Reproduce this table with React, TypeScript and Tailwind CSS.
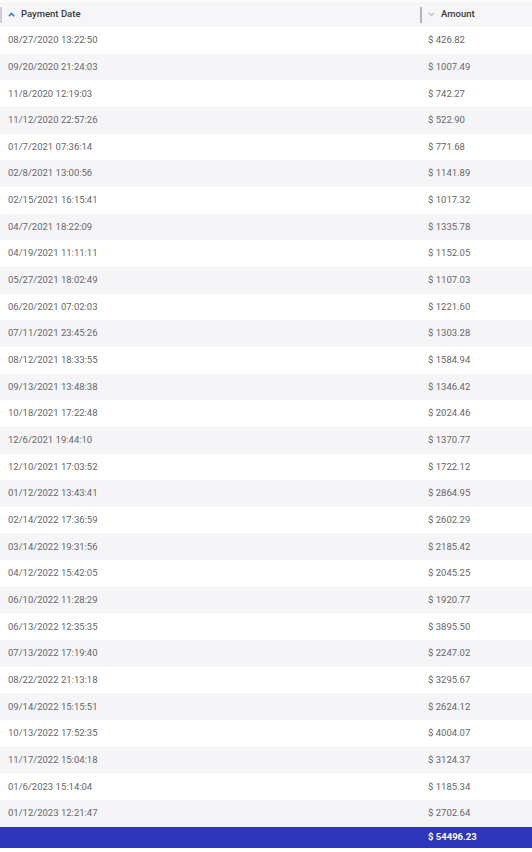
import React from "react"

const ROWS: [string, string][] = [
  ["08/27/2020 13:22:50", "426.82"],
  ["09/20/2020 21:24:03", "1007.49"],
  ["11/8/2020 12:19:03", "742.27"],
  ["11/12/2020 22:57:26", "522.90"],
  ["01/7/2021 07:36:14", "771.68"],
  ["02/8/2021 13:00:56", "1141.89"],
  ["02/15/2021 16:15:41", "1017.32"],
  ["04/7/2021 18:22:09", "1335.78"],
  ["04/19/2021 11:11:11", "1152.05"],
  ["05/27/2021 18:02:49", "1107.03"],
  ["06/20/2021 07:02:03", "1221.60"],
  ["07/11/2021 23:45:26", "1303.28"],
  ["08/12/2021 18:33:55", "1584.94"],
  ["09/13/2021 13:48:38", "1346.42"],
  ["10/18/2021 17:22:48", "2024.46"],
  ["12/6/2021 19:44:10", "1370.77"],
  ["12/10/2021 17:03:52", "1722.12"],
  ["01/12/2022 13:43:41", "2864.95"],
  ["02/14/2022 17:36:59", "2602.29"],
  ["03/14/2022 19:31:56", "2185.42"],
  ["04/12/2022 15:42:05", "2045.25"],
  ["06/10/2022 11:28:29", "1920.77"],
  ["06/13/2022 12:35:35", "3895.50"],
  ["07/13/2022 17:19:40", "2247.02"],
  ["08/22/2022 21:13:18", "3295.67"],
  ["09/14/2022 15:15:51", "2624.12"],
  ["10/13/2022 17:52:35", "4004.07"],
  ["11/17/2022 15:04:18", "3124.37"],
  ["01/6/2023 15:14:04", "1185.34"],
  ["01/12/2023 12:21:47", "2702.64"],
]

export default function App() {
  return (
    <div className="w-[532px] h-[852px] bg-white text-[9.5px] font-['Roboto',sans-serif] text-[#666]">
      {/* Header */}
      <div className="flex h-[27px] items-center bg-[#f6f6f8] border-t-2 border-[#fbfbfc] text-[#3a3a3a] font-medium">
        <div className="h-4 w-[2px] bg-[#d0d0d4]" />
        <div className="flex w-[418px] items-center gap-[6px] pl-[6px]">
          <svg width="7" height="5" viewBox="0 0 7 5">
            <path d="M0.8 4.2 L3.5 1.4 L6.2 4.2" fill="none" stroke="#3b7bd4" strokeWidth="1.6" />
          </svg>
          <span>Payment Date</span>
        </div>
        <div className="h-4 w-[2px] bg-[#b5b5b8]" />
        <div className="flex items-center gap-[6px] pl-[6px]">
          <svg width="7" height="5" viewBox="0 0 7 5">
            <path d="M0.8 0.8 L3.5 3.6 L6.2 0.8" fill="none" stroke="#c4c4c8" strokeWidth="1.4" />
          </svg>
          <span>Amount</span>
        </div>
      </div>

      {/* Rows */}
      {ROWS.map(([date, amount], i) => (
        <div
          key={date}
          className={`flex h-[26.67px] items-center ${i % 2 === 1 ? "bg-[#f5f5f8]" : "bg-white"}`}
        >
          <div className="w-[422px] pl-2">{date}</div>
          <div className="pl-[6px]">$ {amount}</div>
        </div>
      ))}

      {/* Total */}
      <div className="flex h-[21px] items-center bg-[#2d36b9] text-white font-bold">
        <div className="w-[422px]" />
        <div className="pl-[6px]">$ 54496.23</div>
      </div>
    </div>
  )
}
